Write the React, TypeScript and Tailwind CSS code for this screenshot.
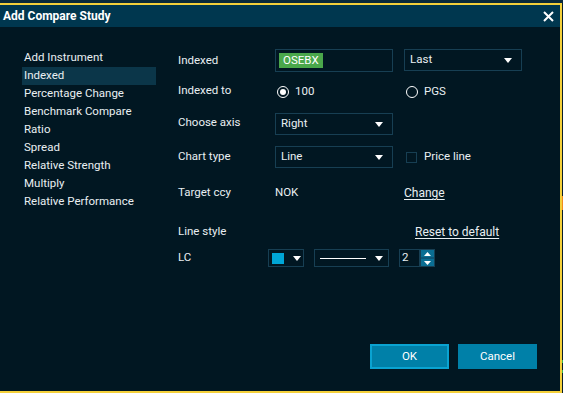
import { useState } from "react";

const navItems = [
    "Add Instrument",
    "Indexed",
    "Percentage Change",
    "Benchmark Compare",
    "Ratio",
    "Spread",
    "Relative Strength",
    "Multiply",
    "Relative Performance",
];

const Caret = () => (
    <svg width="8" height="5" viewBox="0 0 8 5" className="shrink-0">
        <path d="M0 0h8L4 5z" fill="#ffffff" />
    </svg>
);

const Select = ({ value, className }: { value: string; className?: string }) => (
    <div className={`flex h-[22px] items-center justify-between border border-[#173f53] pl-[5px] pr-[9px] ${className ?? ""}`}>
        <span>{value}</span>
        <Caret />
    </div>
);

const Radio = ({ checked, label }: { checked?: boolean; label: string }) => (
    <div className="flex items-center gap-[6px]">
        <span className="flex h-[12px] w-[12px] items-center justify-center rounded-full border border-white">
            {checked && <span className="h-[6px] w-[6px] rounded-full bg-white" />}
        </span>
        <span>{label}</span>
    </div>
);

const App = () => {
    const [active, setActive] = useState("Indexed");

    return (
        <div className="relative flex h-[393px] w-[563px] flex-col overflow-hidden bg-[#0a1e29] font-['Roboto',sans-serif] text-[11.5px] text-[#e9eff2]">
            {/* app behind the dialog */}
            <div className="h-[3px] bg-[#0b2a3a]" />
            <div className="absolute right-0 top-[196px] h-[14px] w-[1px] bg-[#f08a1c]" />
            <div className="absolute right-0 top-[360px] h-[3px] w-[1px] bg-[#3cb44a]" />
            <div className="absolute right-0 top-[370px] h-[3px] w-[1px] bg-[#3cb44a]" />

            <div className="flex h-[390px] w-[562px] flex-col border-y-2 border-r-2 border-[#f4d03a] bg-[#011722]">
                <div className="flex h-[22px] items-center justify-between bg-[#00374f] pl-[3px] pr-[6px]">
                    <span className="text-[12px] font-bold text-white">Add Compare Study</span>
                    <svg width="11" height="11" viewBox="0 0 11 11">
                        <path d="M1 1l9 9M10 1l-9 9" stroke="#ffffff" strokeWidth="2" />
                    </svg>
                </div>

                <div className="flex flex-1 flex-col">
                    <div className="flex">
                        <ul className="ml-[22px] mt-[22px] w-[134px]">
                            {navItems.map((item) => (
                                <li
                                    key={item}
                                    onClick={() => setActive(item)}
                                    className={`flex h-[18px] cursor-pointer items-center pl-[2px] ${active === item ? "bg-[#0b3649]" : ""}`}
                                >
                                    {item}
                                </li>
                            ))}
                        </ul>

                        <div className="ml-[22px] mt-[22px] flex flex-col">
                            <div className="flex h-[23px]">
                                <span className="mt-[3px] w-[97px]">Indexed</span>
                                <div className="flex h-[23px] w-[118px] items-center border border-[#173f53] pl-[3px]">
                                    <span className="flex h-[15px] items-center bg-[#4aa74b] px-[4px] text-white">OSEBX</span>
                                </div>
                                <Select value="Last" className="ml-[11px] w-[118px]" />
                            </div>

                            <div className="mt-[11px] flex h-[18px] items-center">
                                <span className="w-[97px] -translate-y-[1px]">Indexed to</span>
                                <div className="w-[118px] pl-[2px]">
                                    <Radio checked label="100" />
                                </div>
                                <div className="ml-[11px] pl-[2px]">
                                    <Radio label="PGS" />
                                </div>
                            </div>

                            <div className="mt-[12px] flex h-[22px] items-center">
                                <span className="w-[97px] -translate-y-[1px]">Choose axis</span>
                                <Select value="Right" className="w-[118px]" />
                            </div>

                            <div className="mt-[11px] flex h-[22px] items-center">
                                <span className="w-[97px]">Chart type</span>
                                <Select value="Line" className="w-[118px]" />
                                <div className="ml-[13px] flex items-center gap-[7px]">
                                    <span className="h-[11px] w-[11px] border border-[#173f53]" />
                                    <span>Price line</span>
                                </div>
                            </div>

                            <div className="mt-[16px] flex h-[18px] items-center">
                                <span className="w-[97px]">Target ccy</span>
                                <span className="w-[118px]">NOK</span>
                                <span className="ml-[11px] text-[12px] underline underline-offset-2">Change</span>
                            </div>

                            <div className="mt-[21px] flex h-[18px] items-center">
                                <span className="w-[97px]">Line style</span>
                                <span className="ml-[140px] text-[12px] underline underline-offset-2">Reset to default</span>
                            </div>

                            <div className="mt-[8px] flex h-[18px] items-center">
                                <span className="w-[90px]">LC</span>
                                <div className="flex h-[18px] w-[36px] items-center border border-[#173f53] pl-[3px]">
                                    <span className="h-[11px] w-[12px] bg-[#00a6d6]" />
                                    <span className="ml-[9px]">
                                        <Caret />
                                    </span>
                                </div>
                                <div className="ml-[10px] flex h-[18px] w-[75px] items-center border border-[#173f53] pl-[5px]">
                                    <span className="h-[1px] w-[46px] bg-white" />
                                    <span className="ml-[9px]">
                                        <Caret />
                                    </span>
                                </div>
                                <div className="ml-[10px] flex h-[18px] w-[21px] items-center border border-[#173f53] pl-[2px]">
                                    2
                                </div>
                                <div className="flex h-[18px] w-[15px] flex-col justify-between border border-[#173f53] bg-[#0b5677]">
                                    <span className="flex h-[7px] items-center justify-center bg-[#0a6e93]">
                                        <svg width="7" height="4" viewBox="0 0 7 4">
                                            <path d="M0 4h7L3.5 0z" fill="#ffffff" />
                                        </svg>
                                    </span>
                                    <span className="flex h-[7px] items-center justify-center bg-[#0a6e93]">
                                        <svg width="7" height="4" viewBox="0 0 7 4">
                                            <path d="M0 0h7L3.5 4z" fill="#ffffff" />
                                        </svg>
                                    </span>
                                </div>
                            </div>
                        </div>
                    </div>

                    <div className="mt-auto flex justify-end gap-[9px] pb-[22px] pr-[23px]">
                        <button className="h-[25px] w-[79px] border-2 border-[#0aa3d1] bg-[#0080a8] text-white">OK</button>
                        <button className="h-[25px] w-[79px] bg-[#0080a8] text-white">Cancel</button>
                    </div>
                </div>
            </div>
        </div>
    );
};

export default App;
